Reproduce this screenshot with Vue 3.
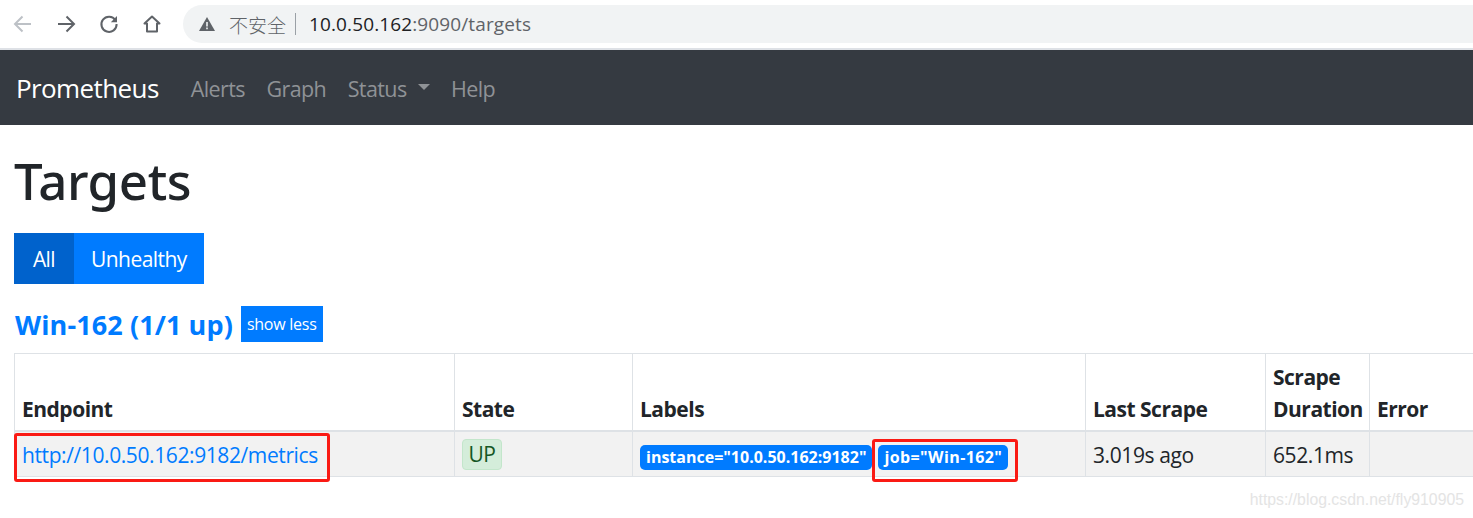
<template>
  <div class="page">
    <!-- browser toolbar -->
    <div class="toolbar">
      <svg class="tb-icon" viewBox="0 0 24 24" fill="none" stroke="#bdc1c6" stroke-width="2"><path d="M20 12H4.5M11.5 4.5 4 12l7.5 7.5" /></svg>
      <svg class="tb-icon" viewBox="0 0 24 24" fill="none" stroke="#5f6368" stroke-width="2"><path d="M4 12h15.5M12.5 4.5 20 12l-7.5 7.5" /></svg>
      <svg class="tb-icon" viewBox="0 0 24 24" fill="none" stroke="#5f6368" stroke-width="2"><path d="M18.4 8.2A7.6 7.6 0 1 0 19.6 12" /><path d="M20 4v6.2h-6.2z" fill="#5f6368" stroke="none" /></svg>
      <svg class="tb-icon" viewBox="0 0 24 24" fill="none" stroke="#5f6368" stroke-width="2"><path d="M12 4.5 4.5 11.5H7V19.5H17V11.5H19.5z" stroke-linejoin="round" /></svg>
      <div class="omnibox">
        <svg class="warn" viewBox="0 0 16 16"><path d="M8 1 16 15H0z" fill="#5f6368" /><path d="M7.2 6h1.6v4.6H7.2zM7.2 11.6h1.6v1.6H7.2z" fill="#f1f3f4" /></svg>
        <span class="insecure">不安全</span>
        <span class="omni-sep"></span>
        <span class="url"><b>10.0.50.162</b>:9090/targets</span>
      </div>
    </div>

    <nav class="navbar">
      <a class="brand">Prometheus</a>
      <a v-for="item in navItems" :key="item" class="nav-link" :class="{ caret: item === 'Status' }">{{ item }}</a>
    </nav>

    <main class="content">
      <h1>Targets</h1>
      <div class="btn-group">
        <button class="btn active">All</button>
        <button class="btn">Unhealthy</button>
      </div>

      <div class="job-head">
        <a class="job-title">Win-162 (1/1 up)</a>
        <button class="btn-sm">show less</button>
      </div>

      <div class="table-wrap">
        <table>
          <colgroup>
            <col v-for="w in colWidths" :key="w" :style="{ width: w + 'px' }" />
          </colgroup>
          <thead>
            <tr>
              <th>Endpoint</th>
              <th>State</th>
              <th>Labels</th>
              <th>Last Scrape</th>
              <th>Scrape Duration</th>
              <th>Error</th>
            </tr>
          </thead>
          <tbody>
            <tr>
              <td><a class="endpoint">http://10.0.50.162:9182/metrics</a></td>
              <td><span class="state">UP</span></td>
              <td>
                <div class="labels">
                  <span class="label">instance="10.0.50.162:9182"</span>
                  <span class="label job">job="Win-162"</span>
                </div>
              </td>
              <td>3.019s ago</td>
              <td>652.1ms</td>
              <td></td>
            </tr>
          </tbody>
        </table>
        <!-- annotation boxes drawn over the screenshot -->
        <div class="mark mark-endpoint"></div>
        <div class="mark mark-job"></div>
      </div>
    </main>

    <div class="watermark">https://blog.csdn.net/fly910905</div>
  </div>
</template>

<script setup>
const navItems = ['Alerts', 'Graph', 'Status', 'Help']
const colWidths = [440, 178, 453, 180, 104, 104]
</script>

<style>
html, body {
  margin: 0;
  background: #fff;
  overflow: hidden;
}
</style>

<style scoped>
.page {
  position: relative;
  width: 1473px;
  height: 518px;
  overflow: hidden;
  font-family: "Open Sans", "Noto Sans", "Noto Sans CJK SC", sans-serif;
  color: #212529;
}

.toolbar {
  display: flex;
  align-items: center;
  height: 48px;
  padding-left: 11px;
  gap: 19px;
  border-bottom: 2px solid #dee1e6;
}

.tb-icon {
  width: 24px;
  height: 24px;
  flex: none;
}

.omnibox {
  display: flex;
  align-items: center;
  flex: 1;
  height: 38px;
  margin-right: -30px;
  padding-left: 16px;
  border-radius: 19px;
  background: #f1f3f4;
}

.warn {
  width: 16px;
  height: 16px;
  margin-right: 14px;
}

.insecure {
  font-size: 19px;
  color: #5f6368;
  font-family: "Noto Sans CJK SC", sans-serif;
  font-weight: 300;
}

.omni-sep {
  width: 1px;
  height: 22px;
  margin: 0 13px 0 9px;
  background: #9aa0a6;
}

.url {
  font-size: 19px;
  letter-spacing: 0.12px;
  color: #5f6368;
}

.url b {
  font-weight: 400;
  color: #202124;
}

.navbar {
  display: flex;
  align-items: center;
  height: 75px;
  padding: 1px 0 0 16px;
  box-sizing: border-box;
  background: #353a41;
}

.brand {
  font-size: 26px;
  letter-spacing: -0.6px;
  color: #fff;
  margin-right: 32px;
}

.nav-link {
  font-size: 21.5px;
  letter-spacing: -0.6px;
  color: #8f9296;
  margin-right: 21.5px;
}

.caret {
  display: flex;
  align-items: center;
}

.caret::after {
  content: "";
  margin-left: 11px;
  margin-top: -3px;
  border-top: 6px solid #8f9296;
  border-left: 6px solid transparent;
  border-right: 6px solid transparent;
}

.content {
  padding-left: 14px;
}

h1 {
  margin: 13px 0 0;
  font-family: "Noto Sans", "Open Sans", sans-serif;
  font-size: 51px;
  font-weight: 500;
  line-height: 84px;
  letter-spacing: -0.4px;
}

.btn-group {
  display: flex;
  margin-top: 11px;
}

.btn {
  height: 51px;
  border: 0;
  padding: 0 17px;
  font: inherit;
  font-size: 21px;
  letter-spacing: -0.55px;
  color: #fff;
  background: #007bff;
}

.btn.active {
  width: 60px;
  padding: 0;
  background: #0062cc;
}

.job-head {
  display: flex;
  align-items: center;
  margin-top: 22px;
  height: 36px;
}

.job-title {
  font-size: 27px;
  font-weight: 700;
  letter-spacing: 0.1px;
  color: #007bff;
  margin-left: 1px;
  margin-right: 8px;
}

.btn-sm {
  height: 36px;
  border: 0;
  padding: 0 6px;
  font: inherit;
  font-size: 16px;
  letter-spacing: -0.25px;
  color: #fff;
  background: #007bff;
}

.table-wrap {
  position: relative;
  margin-top: 11px;
}

table {
  border-collapse: collapse;
  table-layout: fixed;
  width: 1459px;
  font-size: 21px;
  letter-spacing: -0.4px;
}

th, td {
  border: 1px solid #dee2e6;
  padding: 0 7px;
  text-align: left;
}

th {
  height: 77px;
  padding-bottom: 5px;
  border-bottom-width: 2px;
  box-sizing: border-box;
  vertical-align: bottom;
  font-weight: 700;
  line-height: 32px;
  letter-spacing: -0.5px;
}

td {
  height: 46px;
  padding-top: 2px;
  box-sizing: border-box;
  background: #f2f2f2;
  vertical-align: middle;
}

.endpoint {
  color: #007bff;
}

.state {
  display: block;
  width: 40px;
  height: 31px;
  line-height: 29px;
  text-align: center;
  border: 1px solid #c3e6cb;
  border-radius: 4px;
  color: #155724;
  background: #d4edda;
  box-sizing: border-box;
}

.labels {
  display: flex;
  gap: 6px;
  margin-top: 5px;
  white-space: nowrap;
}

.label {
  height: 25px;
  line-height: 25px;
  padding: 0 6px;
  border-radius: 5px;
  font-size: 16px;
  font-weight: 700;
  letter-spacing: 0;
  color: #fff;
  background: #007bff;
}

.label.job {
  letter-spacing: 0.4px;
}

.mark {
  position: absolute;
  border: 3px solid #fa1a14;
  border-radius: 3px;
  box-sizing: border-box;
}

.mark-endpoint {
  left: 0;
  top: 80px;
  width: 316px;
  height: 49px;
}

.mark-job {
  left: 858px;
  top: 86px;
  width: 146px;
  height: 43px;
}

.watermark {
  position: absolute;
  right: 9px;
  top: 491px;
  font-family: "Liberation Sans", sans-serif;
  font-size: 15.8px;
  color: #e4e4e4;
}
</style>
